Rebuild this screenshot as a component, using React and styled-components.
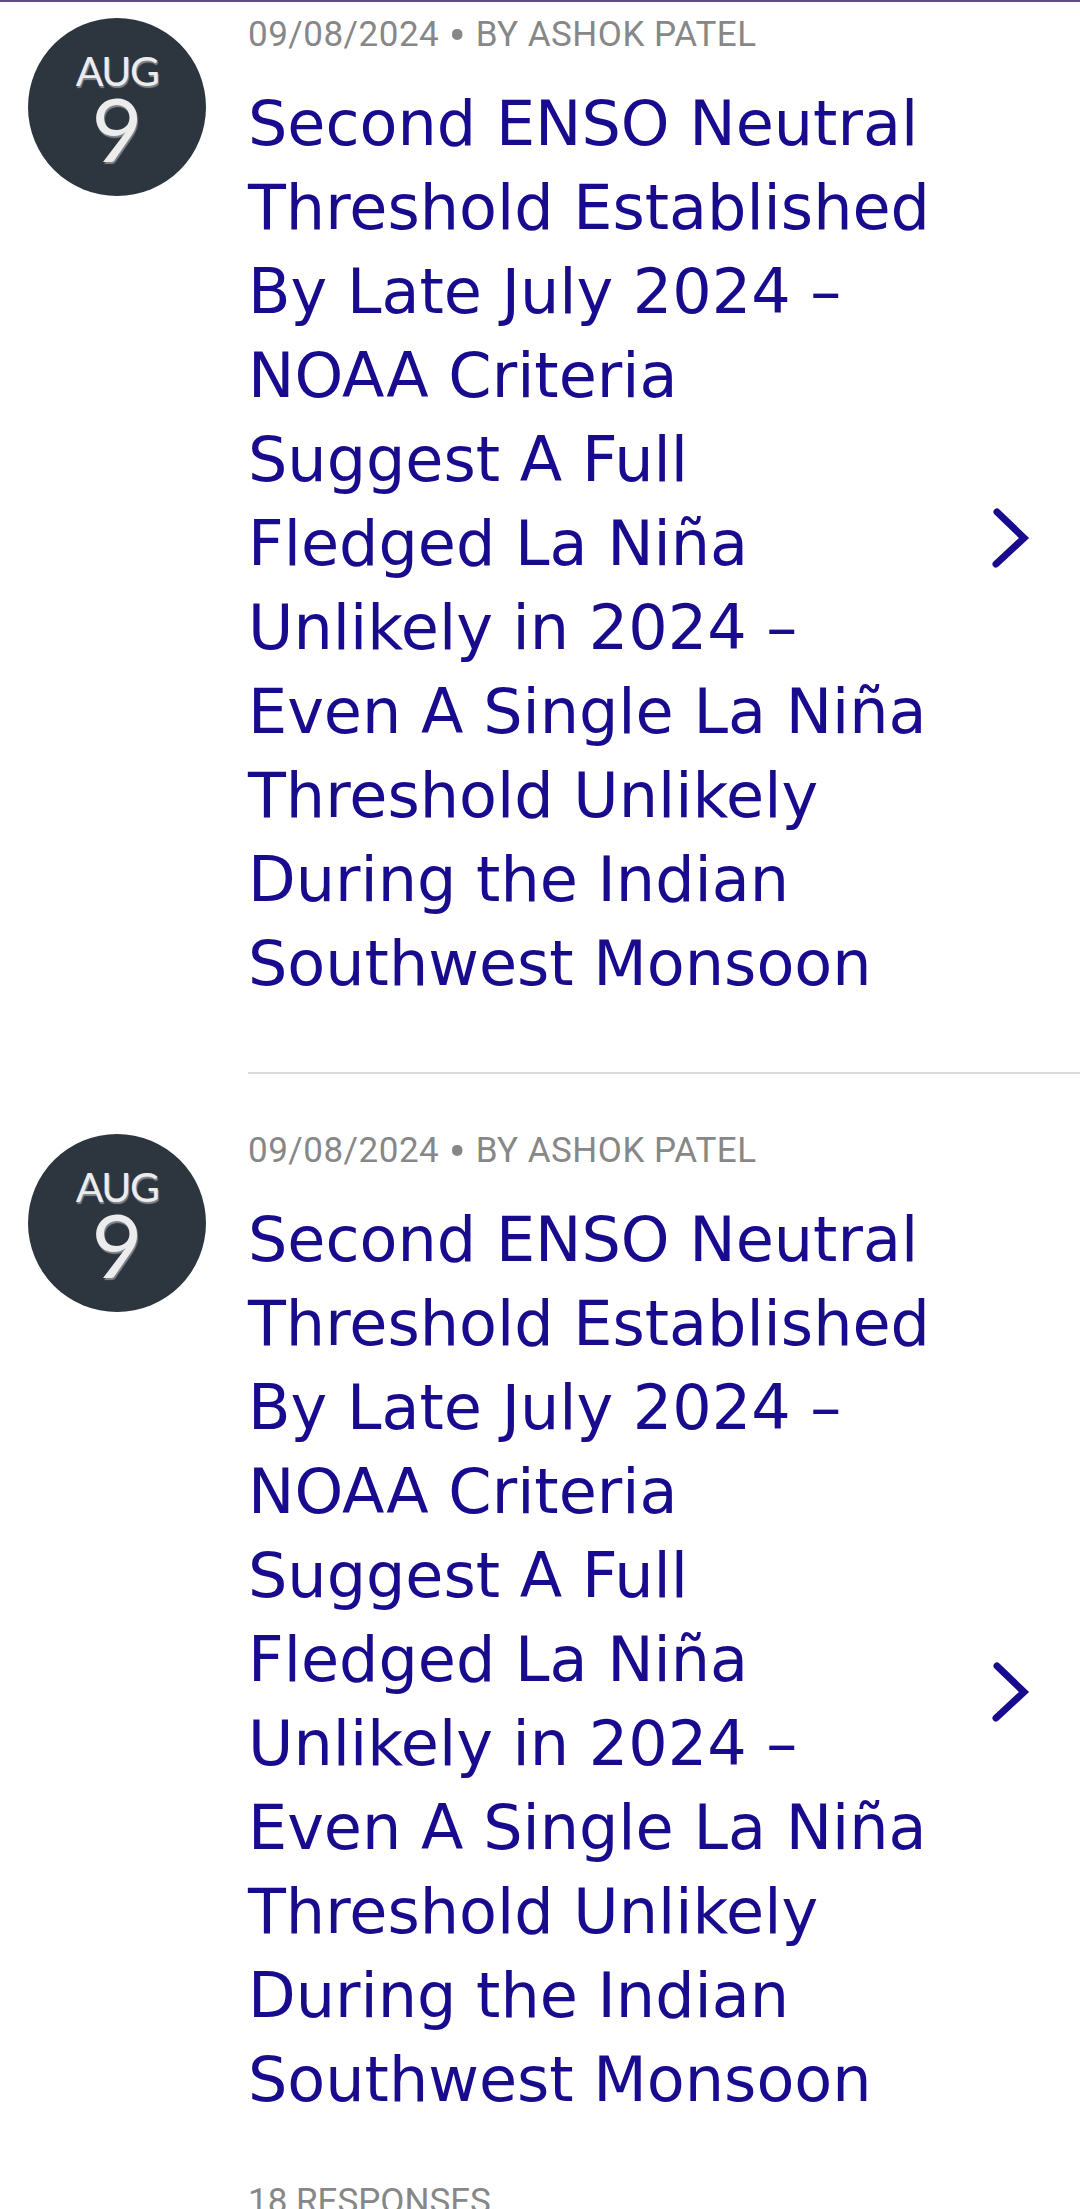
import styled, { createGlobalStyle } from 'styled-components'

const posts = [
	{ id: 1, month: 'AUG', day: '9', date: '09/08/2024', author: 'ASHOK PATEL' },
	{ id: 2, month: 'AUG', day: '9', date: '09/08/2024', author: 'ASHOK PATEL' },
]

const titleLines = [
	'Second ENSO Neutral',
	'Threshold Established',
	'By Late July 2024 –',
	'NOAA Criteria',
	'Suggest A Full',
	'Fledged La Niña',
	'Unlikely in 2024 –',
	'Even A Single La Niña',
	'Threshold Unlikely',
	'During the Indian',
	'Southwest Monsoon',
]

const Chevron = () => (
	<svg width='44' height='64' viewBox='0 0 44 64' fill='none'>
		<polyline
			points='7,6 34,32 6,58'
			stroke='#180b8e'
			strokeWidth='7'
			strokeLinecap='round'
			strokeLinejoin='miter'
		/>
	</svg>
)

const App = () => {
	return (
		<>
			<GlobalStyle />
			<Page>
				{posts.map((post, i) => {
					const last = i === posts.length - 1
					return (
						<Item key={post.id}>
							<DateBadge>
								<Month>{post.month}</Month>
								<Day>{post.day}</Day>
							</DateBadge>
							<Content $last={last}>
								<Text>
									<Meta>
										{post.date} <Dot>•</Dot> BY {post.author}
									</Meta>
									<Title>
										{titleLines.map((line, j) => (
											<span key={j}>
												{line}
												{j < titleLines.length - 1 && <br />}
											</span>
										))}
									</Title>
								</Text>
								<Arrow $last={last} aria-label='Open post'>
									<Chevron />
								</Arrow>
							</Content>
						</Item>
					)
				})}
				<Responses>18 RESPONSES</Responses>
			</Page>
		</>
	)
}

export default App

const GlobalStyle = createGlobalStyle`
	html, body {
		margin: 0;
		padding: 0;
		background: #ffffff;
	}
	body {
		font-family: Roboto, 'Liberation Sans', sans-serif;
	}
`

const Page = styled.main`
	border-top: 2px solid #5e4d7e;
	background: #fff;
	overflow: hidden;
`

const Item = styled.article`
	display: flex;
	align-items: flex-start;
	padding-left: 28px;
	& + & {
		margin-top: 44px;
	}
`

const DateBadge = styled.div`
	flex-shrink: 0;
	width: 178px;
	height: 178px;
	margin-top: 16px;
	border-radius: 50%;
	background: #2d353f;
	display: flex;
	flex-direction: column;
	align-items: center;
	justify-content: center;
	color: #ececec;
	font-family: Lato, 'Open Sans', sans-serif;
	text-shadow: 1px 2px 1px rgba(150, 156, 164, 0.8);
`

const Month = styled.div`
	font-size: 41px;
	line-height: 32px;
	letter-spacing: -1.5px;
	margin-top: 2px;
`

const Day = styled.div`
	font-size: 88px;
	line-height: 66px;
	margin-top: 8px;
`

const Content = styled.div`
	flex: 1;
	margin-left: 42px;
	display: flex;
	align-items: center;
	padding: 13px 0 ${props => (props.$last ? '60px' : '66px')};
	border-bottom: ${props => (props.$last ? 'none' : '2px solid #dcdcdc')};
`

const Text = styled.div`
	flex: 1;
`

const Meta = styled.div`
	font-family: Roboto, 'Liberation Sans', sans-serif;
	font-size: 35px;
	line-height: 40px;
	letter-spacing: 0.5px;
	color: #878787;
	white-space: nowrap;
`

const Dot = styled.span`
	font-size: 52px;
	line-height: 0;
	vertical-align: -8px;
`

const Title = styled.h2`
	margin: 27px 0 0;
	font-family: 'DejaVu Sans', sans-serif;
	font-weight: 400;
	font-size: 62px;
	line-height: 84px;
	color: #180b8e;
	white-space: nowrap;
`

const Arrow = styled.div`
	flex-shrink: 0;
	display: flex;
	margin-right: 46px;
	margin-top: ${props => (props.$last ? '130px' : '55px')};
`

const Responses = styled.div`
	padding-left: 248px;
	font-size: 35px;
	line-height: 40px;
	color: #878787;
`
